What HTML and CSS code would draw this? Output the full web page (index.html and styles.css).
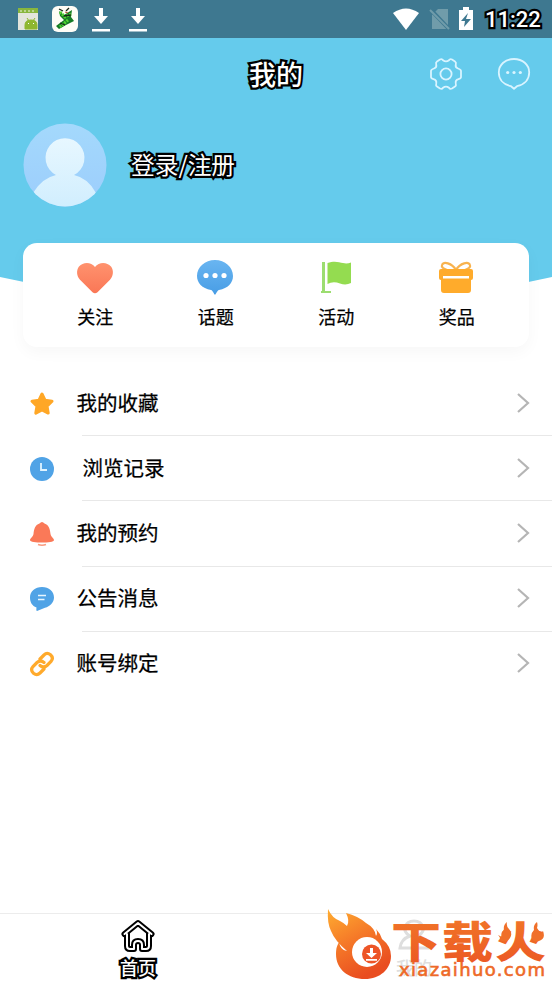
FILE: index.html
```html
<!DOCTYPE html>
<html lang="zh-CN">
<head>
<meta charset="utf-8">
<title>我的</title>
<link rel="stylesheet" href="styles.css">
</head>
<body>
<div class="status">
  <div class="notices">
    <svg width="20" height="24" viewBox="0 0 20 24"><path fill="#e3e5dc" d="M0 1h20v22H0z"/><path fill="#88b63e" d="M0 1h20v5H0z"/><path stroke="#eef4df" stroke-dasharray="2 2" d="M2 4h16"/><path fill="#8eb72f" d="M7 21v-3q0-5 6-5t6 5v4H7zM9 11l2 3m6-3-2 3" stroke="#8eb72f"/><path fill="#fff" d="M10 16h1v1h-1zm5 0h1v1h-1z"/></svg>
    <svg width="28" height="28" viewBox="0 0 28 28"><rect x="1" y="1" width="26" height="26" rx="6" fill="#fffdf6"/><path d="m8 6 5 4 8-5-1 7 3 4-8 4-7 4-3-3 8-6-4-4z" fill="#167b25"/><path d="m9 7 5 5 6-3m-3 6-8 7" fill="none" stroke="#54d333" stroke-width="3" stroke-dasharray="2 1"/><path d="m8 4 4 2m6-3-3 3m-2 5 7-1M9 18l5 2" stroke="#192719" stroke-width="1.3"/><path d="m14 7 3 1" stroke="#c45637"/></svg>
    <svg class="download" width="20" height="26" viewBox="0 0 20 26"><path fill="#fff" d="M8 2h4v8h5l-7 8-7-8h5zM1 23h18v2.500H1z"/></svg>
    <svg class="download" width="20" height="26" viewBox="0 0 20 26"><path fill="#fff" d="M8 2h4v8h5l-7 8-7-8h5zM1 23h18v2.500H1z"/></svg>
  </div>
  <div class="signals">
    <svg width="28" height="24" viewBox="0 0 28 24"><path fill="#fff" d="M1 6q13-9 26 0L14 23z"/></svg>
    <svg width="22" height="24" viewBox="0 0 22 24"><path fill="#709caa" d="M9 2h10v20H3V8z"/><path d="m2 3 19 20" stroke="#3e7890" stroke-width="4"/><path d="m1 3 19 19" stroke="#709caa" stroke-width="2"/></svg>
    <svg width="16" height="24" viewBox="0 0 16 24"><path fill="#fff" d="M5 0h6v3h4v20H1V3h4z"/><path fill="#3e7890" d="m10 6-7 8h4l-1 6 7-8H8z"/></svg>
    <time class="outlined">11:22</time>
  </div>
</div>
<header class="hero">
  <div class="titlebar">
    <h1 class="outlined">我的</h1>
    <div class="actions">
      <svg width="34" height="34" viewBox="0 0 34 34" fill="none" stroke="#d9f4ff" stroke-width="1.8"><path stroke-linejoin="round" d="M11 2.500q2-1 3 .7Q17 5.500 20 3.200q1-1.700 3-.7l3 2q1.500 1 .8 3-.8 3 2.200 4 3 1 3 2.500v6q0 1.500-2.500 2.100-3.500.9-2.700 4.400.6 2-.8 3l-3 2q-2 1-3-.7-3-2.300-6 0-1 1.700-3 .7l-3-2q-1.400-1-.8-3 .8-3.500-2.700-4.400Q2 21.500 2 20v-6q0-1.500 3-2.500t2.200-4q-.7-2 .8-3z"/><circle cx="17" cy="17" r="5.600"/></svg>
      <svg width="34" height="34" viewBox="0 0 34 34"><path fill="none" stroke="#d9f4ff" stroke-width="1.800" stroke-linejoin="round" d="M14 29.200C6 27.500 1.800 22 1.800 15.500 1.800 7.500 8.500 2 17 2s15.200 5.500 15.200 13.500c0 6.500-4.200 12-12.200 13.700l-3 2.600z"/><g fill="#d9f4ff"><circle cx="10.700" cy="15.500" r="1.600"/><circle cx="17" cy="15.500" r="1.600"/><circle cx="23.300" cy="15.500" r="1.600"/></g></svg>
    </div>
  </div>
  <div class="profile">
    <svg width="84" height="84" viewBox="0 0 84 84"><defs><linearGradient id="av" x1="0" y1="0" x2="0" y2="1"><stop stop-color="#a4d9fc"/><stop offset="1" stop-color="#9ccdfc"/></linearGradient><linearGradient id="person" x1="0" y1="0" x2="0" y2="1"><stop stop-color="#e7f7ff"/><stop offset="1" stop-color="#d1eefe"/></linearGradient><clipPath id="round"><circle cx="42" cy="42" r="41.500"/></clipPath></defs><g clip-path="url(#round)"><path fill="url(#av)" d="M0 0h84v84H0z"/><path fill="url(#person)" d="M33 52a19.500 19.500 0 1 1 18 0q14 3 22 18v14H10V70q9-15 23-18"/></g></svg>
    <span class="outlined">登录/注册</span>
  </div>
</header>
<section class="shortcuts">
  <div class="shortcut"><svg width="40" height="36" viewBox="0 0 40 36"><defs><linearGradient id="heart" x1="0" y1="0" x2="0" y2="1"><stop stop-color="#ff926e"/><stop offset="1" stop-color="#fa7756"/></linearGradient></defs><path fill="url(#heart)" d="M20 7C16 1.500 8 1.700 4 6.500c-3 4-2.300 9.800 1 13.200l12.500 12.500q2.500 2.200 5 0L35 19.700c3.300-3.400 4-9.200 1-13.200C32 1.700 24 1.500 20 7"/></svg><span>关注</span></div>
  <div class="shortcut"><svg width="40" height="36" viewBox="0 0 40 36"><defs><linearGradient id="chat" x1="0" y1="0" x2="0" y2="1"><stop stop-color="#69b5f1"/><stop offset="1" stop-color="#489de5"/></linearGradient></defs><path fill="url(#chat)" d="M16 30C7 28.500 2 22.500 2 16 2 7 10 0 20 0s18 7 18 16c0 6.500-5 12.500-14 14-2 .5-3 4.700-4 4.700S18 30.500 16 30"/><g fill="#fff"><circle cx="11" cy="15.500" r="2.600"/><circle cx="20" cy="15.500" r="2.600"/><circle cx="29" cy="15.500" r="2.600"/></g></svg><span>话题</span></div>
  <div class="shortcut"><svg width="40" height="36" viewBox="0 0 40 36"><path fill="#9cdd70" d="M6 2h3v29h6v2H5v-2h1z"/><path fill="#94dc50" d="M11.500 3C18 .5 23 2 27 3q4 1 8-.5V23q-5 2.500-11 .5-7-2.500-12.500.5z"/></svg><span>活动</span></div>
  <div class="shortcut"><svg width="40" height="36" viewBox="0 0 40 36"><path fill="none" stroke="#f8b34f" stroke-width="2.200" d="M20 10C16 3 7 1 6 5q-1 3 5 5m9 0c4-7 13-9 14-5q1 3-5 5"/><path fill="#ffab2b" d="M5 9h30q2 0 2 2v7q0 2-2 2v10q0 3-3 3H8q-3 0-3-3V20q-2 0-2-2v-7q0-2 2-2"/><path fill="#fff" d="M7 16h26v2.500H7z"/></svg><span>奖品</span></div>
</section>
<main class="list">
  <div class="row"><svg class="icon" viewBox="0 0 26 26"><path fill="#ffa726" stroke="#ffa726" stroke-width="3" stroke-linejoin="round" d="m13 3 3 6.200 7 1-5 4.900 1.200 7L13 19l-6.200 3.100L8 15.100l-5-4.900 7-1z"/></svg><span>我的收藏</span><svg class="chevron" viewBox="0 0 14 22"><path d="m2 2 10 9-10 9"/></svg></div>
  <div class="row history"><svg class="icon" viewBox="0 0 26 26"><circle cx="13" cy="13" r="12" fill="#50a3e6"/><path fill="none" stroke="#e1f4ff" stroke-width="1.800" d="M12 7v7h6"/></svg><span>浏览记录</span><svg class="chevron" viewBox="0 0 14 22"><path d="m2 2 10 9-10 9"/></svg></div>
  <div class="row"><svg class="icon" viewBox="0 0 26 26"><path fill="#fa7958" d="M10.500 2.500q2.500-3 5 0C20 4 21 8 21.500 13c.5 3 3.500 4.500 3.500 6 0 2-6 2.500-12 2.500S1 21 1 19c0-1.500 3-3 3.500-6C5 8 6 4 10.500 2.500"/><path d="M9 23.500q4 1.500 8 0" fill="none" stroke="#fa9a7e" stroke-width="1.500"/></svg><span>我的预约</span><svg class="chevron" viewBox="0 0 14 22"><path d="m2 2 10 9-10 9"/></svg></div>
  <div class="row"><svg class="icon" viewBox="0 0 26 26"><path fill="#50a3e6" d="M13 1c7 0 12 4.500 12 10.500 0 5-4 9-9 10.300L8 25q-1 0-.5-3.500C3 20 1 16 1 11.500 1 5.500 6 1 13 1"/><path stroke="#e8f6ff" stroke-width="1.700" d="M9 9.500h8M9 13.500h6.500"/></svg><span>公告消息</span><svg class="chevron" viewBox="0 0 14 22"><path d="m2 2 10 9-10 9"/></svg></div>
  <div class="row"><svg class="icon" viewBox="0 0 26 26"><g fill="none" stroke="#ffaa2c" stroke-width="3.200" stroke-linecap="round"><path d="m11 8 4-4q3-3 6.500-.2 3.500 3.200.5 6.700l-4 4q-3.500 3-7 0"/><path d="m15 18-4 4q-3 3-6.500.2Q1 19 4 15.500l4-4q3.500-3 7 0"/></g></svg><span>账号绑定</span><svg class="chevron" viewBox="0 0 14 22"><path d="m2 2 10 9-10 9"/></svg></div>
</main>
<nav class="tabs">
  <div class="tab"><svg width="36" height="36" viewBox="0 0 36 36" fill="none" stroke-linejoin="round" stroke-linecap="round"><path stroke="#000" stroke-width="6" d="M4.500 16 18 5l13.500 11M7 16v12q0 3 3 3h4v-4q0-4 4-4t4 4v4h4q3 0 3-3V16"/><path stroke="#fff" stroke-width="2" d="M4.500 16 18 5l13.500 11M7 16v12q0 3 3 3h4v-4q0-4 4-4t4 4v4h4q3 0 3-3V16"/></svg><span class="outlined">首页</span></div>
  <div class="tab mine"><svg width="36" height="36" viewBox="0 0 36 36" fill="none" stroke="#dedede" stroke-width="3"><path d="M14 18C5 13 9 3 18 3s13 10 4 15q9 3 10 12H4q1-9 10-12z"/></svg><span>我的</span></div>
</nav>
<svg class="brand" width="226" height="73" viewBox="0 0 226 73">
  <defs><linearGradient id="fire" x1="0" y1="0" x2=".5" y2="1"><stop stop-color="#ffad31"/><stop offset=".5" stop-color="#f57928"/><stop offset="1" stop-color="#e94d20"/></linearGradient><linearGradient id="word" x1="0" y1="0" x2="0" y2="1"><stop stop-color="#f27b29"/><stop offset="1" stop-color="#eb5524"/></linearGradient></defs>
  <path fill="url(#fire)" d="M2 1q4 9 12 12 4 2 7 5 3-5-1-13 12 3 20 10 9 5 10 13 2-3 0-7 4 4 6 10 9 7 9 17c0 13-11 23-26 23-17 0-29-10-29-25 0-6 1-8 3-12 1 5 3 8 8 9Q9 33 5 23 1 15 2 1"/>
  <circle cx="41" cy="44" r="15" fill="#fff"/><circle cx="45.500" cy="46" r="9.500" fill="#ed5527"/><path fill="#fff" d="M44 40h3v5h4L45.500 50 40 45h4zM40 51h11v1.700H40z"/>
  <g font-family="'Noto Sans CJK SC',sans-serif" font-weight="900" font-size="43" fill="url(#word)"><text x="65" y="50" textLength="50" lengthAdjust="spacingAndGlyphs">下</text><text x="116" y="50" textLength="51" lengthAdjust="spacingAndGlyphs">载</text><text x="169" y="50" textLength="51" lengthAdjust="spacingAndGlyphs">火</text></g>
  <path fill="#f0702a" d="M181 14q-1 4 2 7 4 4 1 9-4 6-10 2 1-2-2-5l4 2q-2-5 2-7-1-5 3-8m30 0q-4 3-3 8-4 4-2 9 2 4 7 2 7-2 4-10l-3 3q-1-4-3-6 1-3 0-6"/>
  <text class="address" x="73" y="67.500" textLength="146" lengthAdjust="spacing">xiazaihuo.com</text>
</svg>
</body>
</html>
```
FILE: styles.css
```css
* { box-sizing: border-box; }
body {
  margin: 0;
  width: 552px;
  height: 981px;
  display: flex;
  flex-direction: column;
  position: relative;
  overflow: hidden;
  background: #fff;
  color: #000;
  font-family: "Noto Sans CJK SC", sans-serif;
}
svg { display: block; flex: none; }
.outlined {
  color: #fff;
  -webkit-text-stroke: 4.5px #000;
  paint-order: stroke fill;
  stroke-linejoin: round;
}
.status {
  height: 38px;
  flex: none;
  display: flex;
  align-items: center;
  justify-content: space-between;
  padding: 0 12px 0 18px;
  background: #3e7890;
}
.notices { display: flex; align-items: center; gap: 13px; }
.notices .download { margin-left: -1px; }
.notices .download + .download { margin-left: 4px; }
.signals { display: flex; align-items: center; gap: 7px; }
.signals svg:first-child { margin-right: 2px; }
.signals time { width: 55px; margin-left: 4px; font: 500 22px/38px Roboto, sans-serif; white-space: nowrap; position: relative; top: 1px; }
.signals { margin-left: auto; }
.hero {
  height: 272px;
  flex: none;
  background: #65cbec;
  clip-path: path("M0 0H552V239Q276 300 0 239Z");
}
.titlebar {
  height: 72px;
  display: grid;
  grid-template-columns: 1fr auto 1fr;
  align-items: center;
}
h1 { grid-column: 2; margin: 0; font-size: 27px; line-height: 40px; font-weight: 500; }
.actions { display: flex; justify-content: flex-end; gap: 34px; padding-right: 21px; }
.profile { display: flex; align-items: center; gap: 24px; padding: 13px 0 0 23px; }
.profile span { font-size: 23.7px; font-weight: 400; line-height: 34px; padding-bottom: 3px; }
.shortcuts {
  position: relative;
  height: 104px;
  flex: none;
  margin: -67px 23px 0;
  padding: 17px 12px 0;
  display: grid;
  grid-template-columns: repeat(4, 1fr);
  border-radius: 14px;
  background: #fff;
  box-shadow: 0 5px 16px rgba(0, 0, 0, .035);
}
.shortcut { display: flex; flex-direction: column; align-items: center; gap: 7px; font-size: 18px; line-height: 27px; -webkit-text-stroke: .25px #000; }
.shortcut svg { margin-left: -1px; }
.list { margin-top: 23px; }
.row { height: 65.2px; display: flex; align-items: center; position: relative; padding: 0 22px 0 29px; font-size: 20.5px; -webkit-text-stroke: .25px #000; }
.row span { margin-left: 21.5px; line-height: 30px; padding-bottom: 2px; }
.row.history span { margin-left: 27.5px; }
.row + .row::before { content: ""; position: absolute; left: 82px; right: 0; top: 0; height: 1px; background: #e8e8e8; }
.icon { width: 26px; height: 26px; position: relative; top: 1px; }
.chevron { width: 14px; height: 22px; margin-left: auto; fill: none; stroke: #b5b5b5; stroke-width: 2.2; }
.tabs { margin-top: auto; height: 68px; flex: none; display: grid; grid-template-columns: 1fr 1fr; border-top: 1px solid #ececec; }
.tab { display: flex; flex-direction: column; align-items: center; padding-top: 4px; font-size: 18px; font-weight: 500; line-height: 26px; }
.mine { color: #dedede; }
.brand { position: absolute; left: 326px; top: 908px; }
.address { font: 18px "DejaVu Sans", sans-serif; fill: #ee6a28; stroke: #ee6a28; stroke-width: .6px; }
```
